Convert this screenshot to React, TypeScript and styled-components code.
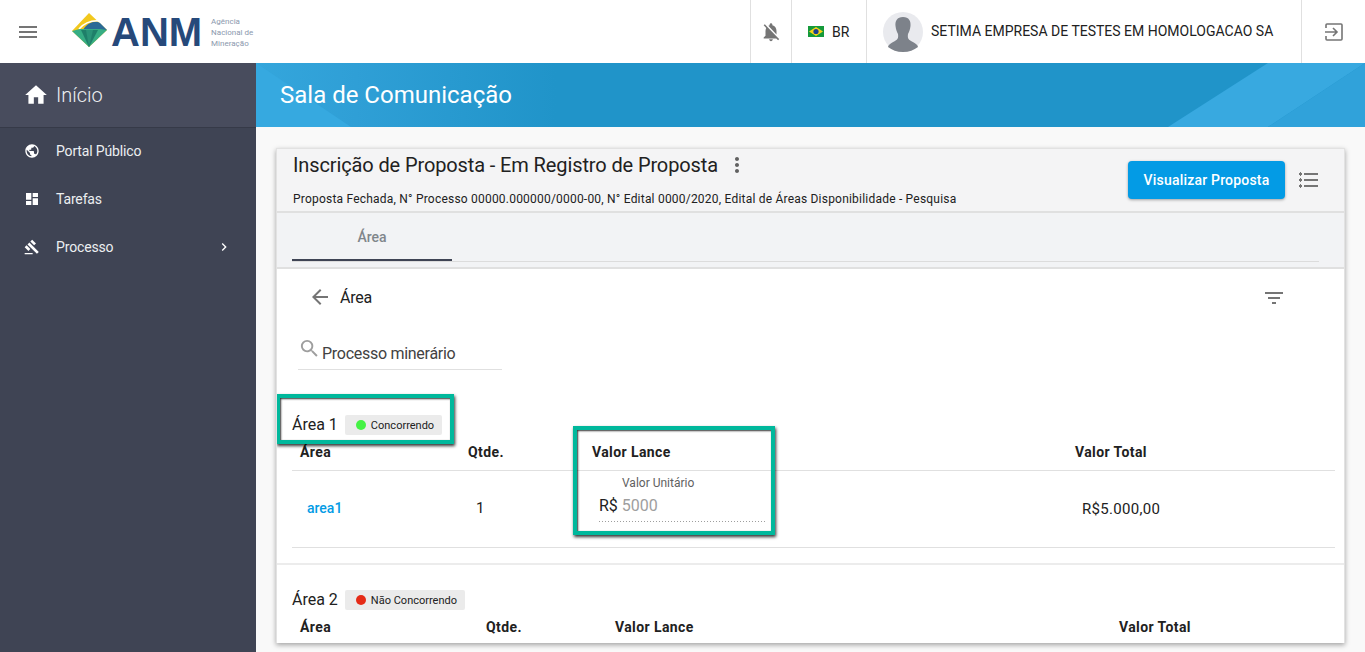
import React from "react";
import styled, { createGlobalStyle } from "styled-components";
import {
	MdMenu,
	MdNotificationsOff,
	MdHome,
	MdPublic,
	MdDashboard,
	MdGavel,
	MdChevronRight,
	MdMoreVert,
	MdFilterList,
	MdArrowBack,
	MdSearch,
} from "react-icons/md";

const GlobalStyle = createGlobalStyle`
	html, body {
		margin: 0;
		padding: 0;
		height: 100%;
		overflow: hidden;
		background: #f9f9f9;
		font-family: Roboto, "Liberation Sans", sans-serif;
		color: #212121;
	}
	* {
		box-sizing: border-box;
	}
`;

const Logo = () => (
	<LogoHold>
		<svg width="36" height="35" viewBox="0 0 36 35">
			<polygon points="0,18 17,0 35,17 17,34" fill="#f2c81e" />
			<path d="M11 17 C15 9 24 7 28 10 L35 17 Z" fill="#2b6a96" />
			<path d="M7 16 C13 9 21 7 29 8" stroke="#ffffff" strokeWidth="1.6" fill="none" />
			<polygon points="0,18 8,16 28,16 35,17 17,34" fill="#36ad84" />
			<polygon points="9,17 26,17 17,34" fill="#1f7f69" />
			<polygon points="14,17 21,17 17,34" fill="#2a9377" />
		</svg>
		<LogoName>ANM</LogoName>
		<LogoText>
			<span>Agência</span>
			<span>Nacional de</span>
			<span>Mineração</span>
		</LogoText>
	</LogoHold>
);

const BrazilFlag = () => (
	<svg width="16" height="11" viewBox="0 0 16 11">
		<rect width="16" height="11" fill="#159a3b" />
		<polygon points="8,1 15,5.5 8,10 1,5.5" fill="#f7d117" />
		<circle cx="8" cy="5.5" r="2.6" fill="#1b3f8f" />
	</svg>
);

const Avatar = () => (
	<AvatarHold>
		<svg width="40" height="40" viewBox="0 0 40 40">
			<circle cx="20" cy="20" r="20" fill="#e9eaee" />
			<path
				d="M20 5 C14 5 12 9 12.5 14 C13 18 14 20 15 22 C15.5 26 15 27 12 29 C8 31 5 33 5 35 C9 38 14 40 20 40 C26 40 31 38 35 35 C35 33 32 31 28 29 C25 27 24.5 26 25 22 C26 20 27 18 27.5 14 C28 9 26 5 20 5 Z"
				fill="#7d828a"
			/>
		</svg>
	</AvatarHold>
);

const ExitIcon = () => (
	<svg width="18" height="18" viewBox="0 0 18 18" fill="none" stroke="#757575" strokeWidth="1.6">
		<path d="M1 5 V2 Q1 1 2 1 H16 Q17 1 17 2 V16 Q17 17 16 17 H2 Q1 17 1 16 V13" />
		<path d="M0 9 H12 M8 5 L12 9 L8 13" />
	</svg>
);

const ListIcon = () => (
	<svg width="20" height="16" viewBox="0 0 20 16" fill="#757575">
		<rect x="5" y="1" width="14" height="2" />
		<rect x="5" y="7" width="14" height="2" />
		<rect x="5" y="13" width="14" height="2" />
		<rect x="0" y="1" width="3" height="2" />
		<rect x="0" y="7" width="3" height="2" />
		<rect x="0" y="13" width="3" height="2" />
		<rect x="1" y="0" width="1" height="4" />
		<rect x="1" y="6" width="1" height="4" />
		<rect x="1" y="12" width="1" height="4" />
	</svg>
);

const App: React.FC = () => {
	return (
		<Page>
			<GlobalStyle />
			<Header>
				<MenuButton>
					<MdMenu size={24} color="#757575" />
				</MenuButton>
				<Logo />
				<HeaderRight>
					<BellCell>
						<MdNotificationsOff size={22} color="#757575" />
					</BellCell>
					<LangCell>
						<BrazilFlag />
						<span>BR</span>
					</LangCell>
					<UserCell>
						<Avatar />
						<span>SETIMA EMPRESA DE TESTES EM HOMOLOGACAO SA</span>
					</UserCell>
					<ExitCell>
						<ExitIcon />
					</ExitCell>
				</HeaderRight>
			</Header>
			<Body>
				<Sidebar>
					<HomeItem>
						<MdHome size={26} color="#fff" />
						<span>Início</span>
					</HomeItem>
					<MenuItem>
						<MdPublic size={16} color="#fff" />
						<span>Portal Público</span>
					</MenuItem>
					<MenuItem>
						<MdDashboard size={16} color="#fff" />
						<span>Tarefas</span>
					</MenuItem>
					<MenuItem>
						<MdGavel size={16} color="#fff" />
						<span>Processo</span>
						<MdChevronRight size={16} color="#fff" />
					</MenuItem>
				</Sidebar>
				<Main>
					<Banner>
						<BannerCorner />
						<BannerStripe $color="#38a9e0" $clip="polygon(100px 0, 197px 0, 100px 100%, 0 100%)" />
						<BannerStripe $color="#30a2da" $clip="polygon(197px 0, 197px 100%, 100px 100%)" />
						<h1>Sala de Comunicação</h1>
					</Banner>
					<Card>
						<CardHead>
							<CardTitles>
								<TitleRow>
									<h2>Inscrição de Proposta - Em Registro de Proposta</h2>
									<MdMoreVert size={24} color="#616161" />
								</TitleRow>
								<p>
									Proposta Fechada, N° Processo 00000.000000/0000-00, N° Edital 0000/2020, Edital de
									Áreas Disponibilidade - Pesquisa
								</p>
							</CardTitles>
							<PrimaryButton>Visualizar Proposta</PrimaryButton>
							<ListIcon />
						</CardHead>
						<TabBar>
							<TabRow>
								<Tab>Área</Tab>
							</TabRow>
						</TabBar>
						<CardBody>
							<BackRow>
								<MdArrowBack size={24} color="#757575" />
								<span>Área</span>
								<MdFilterList size={24} color="#757575" />
							</BackRow>
							<SearchField>
								<MdSearch size={23} color="#9e9e9e" />
								<span>Processo minerário</span>
							</SearchField>
							<Section>
								<SectionTitle>
									<span>Área 1</span>
									<Status>
										<Dot color="#44f244" />
										Concorrendo
									</Status>
									<Highlight $left={-16} $top={-18} $width={178} $height={50} />
								</SectionTitle>
								<TableRow $cols="168px 124px 483px 1fr">
									<span>Área</span>
									<span>Qtde.</span>
									<span>Valor Lance</span>
									<span>Valor Total</span>
								</TableRow>
								<ValueRow>
									<AreaLink>area1</AreaLink>
									<Qty>1</Qty>
									<BidField>
										<label>Valor Unitário</label>
										<div>
											<span>R$</span>
											<em>5000</em>
										</div>
									</BidField>
									<Total>R$5.000,00</Total>
									<Highlight $left={281} $top={-45} $width={202} $height={109} />
								</ValueRow>
							</Section>
							<SecondSection>
								<SectionTitle>
									<span>Área 2</span>
									<Status>
										<Dot color="#e52b17" />
										Não Concorrendo
									</Status>
								</SectionTitle>
								<TableRow $cols="186px 129px 504px 1fr">
									<span>Área</span>
									<span>Qtde.</span>
									<span>Valor Lance</span>
									<span>Valor Total</span>
								</TableRow>
							</SecondSection>
						</CardBody>
					</Card>
				</Main>
			</Body>
		</Page>
	);
};

export default App;

const Page = styled.div`
	width: 1365px;
	height: 652px;
	display: flex;
	flex-direction: column;
	overflow: hidden;
`;

const Header = styled.header`
	height: 63px;
	flex: none;
	background: #fff;
	display: flex;
	align-items: stretch;
`;

const MenuButton = styled.div`
	width: 56px;
	display: flex;
	align-items: center;
	justify-content: center;
`;

const LogoHold = styled.div`
	display: flex;
	align-items: center;
	margin-left: 16px;

	svg {
		margin-right: 3px;
		margin-bottom: 3px;
	}
`;

const LogoName = styled.div`
	font-family: "Liberation Sans", sans-serif;
	font-weight: 700;
	font-size: 40px;
	color: #26497a;
	margin-right: 9px;
	margin-top: 2px;
`;

const LogoText = styled.div`
	display: flex;
	flex-direction: column;
	font-size: 8px;
	line-height: 11px;
	color: #8b98ad;
	margin-top: 2px;
`;

const HeaderRight = styled.div`
	margin-left: auto;
	display: flex;
	align-items: stretch;
`;

const Cell = styled.div`
	display: flex;
	align-items: center;
	border-left: 1px solid #e0e0e0;
`;

const BellCell = styled(Cell)`
	width: 41px;
	justify-content: center;
`;

const LangCell = styled(Cell)`
	width: 75px;
	padding-left: 16px;
	gap: 8px;
	font-size: 14px;
	color: #212121;
`;

const UserCell = styled(Cell)`
	width: 435px;
	padding-left: 16px;
	font-size: 14px;
	color: #212121;

	span {
		margin-left: 8px;
		margin-bottom: 2px;
	}
`;

const AvatarHold = styled.div`
	width: 40px;
	height: 40px;
	flex: none;
`;

const ExitCell = styled(Cell)`
	width: 64px;
	justify-content: center;
`;

const Body = styled.div`
	flex: 1;
	display: flex;
	min-height: 0;
`;

const Sidebar = styled.nav`
	width: 256px;
	flex: none;
	background: #3f4454;
	color: #eceff1;
`;

const HomeItem = styled.div`
	height: 65px;
	display: flex;
	align-items: center;
	padding-left: 23px;
	background: #484c5d;
	border-bottom: 1px solid #363a48;
	font-size: 20px;
	font-weight: 300;

	span {
		margin-left: 7px;
	}
`;

const MenuItem = styled.div`
	height: 48px;
	display: flex;
	align-items: center;
	padding-left: 24px;
	padding-right: 24px;
	font-size: 14px;
	letter-spacing: -0.15px;

	span {
		margin-left: 16px;
		flex: 1;
	}

	&:nth-child(2) {
		margin-top: -1px;
	}
`;

const Main = styled.main`
	flex: 1;
	min-width: 0;
	background: #f9f9f9;
	padding: 0 20px;
`;

const Banner = styled.div`
	height: 64px;
	margin: 0 -20px;
	position: relative;
	overflow: hidden;
	background: linear-gradient(90deg, #34a6dc 0, #2f9fd6 100px, #2094c9 300px);
	display: flex;
	align-items: center;
	padding-left: 24px;

	h1 {
		position: relative;
		margin: 0;
		font-size: 24px;
		font-weight: 400;
		color: #fff;
	}
`;

const BannerCorner = styled.div`
	position: absolute;
	top: 0;
	left: 0;
	bottom: 0;
	width: 95px;
	background: #36a9e0;
	clip-path: polygon(0 0, 100% 100%, 0 100%);
`;

const BannerStripe = styled.div<{ $color: string; $clip: string }>`
	position: absolute;
	top: 0;
	right: 0;
	bottom: 0;
	width: 197px;
	background: ${(p) => p.$color};
	clip-path: ${(p) => p.$clip};
`;

const Card = styled.section`
	margin-top: 21px;
	height: 495px;
	background: #fff;
	border: 1px solid #e2e2e2;
	border-bottom: none;
	box-shadow: 0 2px 5px rgba(0, 0, 0, 0.35);
	overflow: hidden;
	display: flex;
	flex-direction: column;
`;

const CardHead = styled.div`
	height: 64px;
	flex: none;
	background: #f4f4f5;
	border-bottom: 2px solid #e0e0e0;
	display: flex;
	align-items: center;
	padding: 0 25px 0 16px;
`;

const CardTitles = styled.div`
	flex: 1;
	min-width: 0;
	align-self: stretch;

	p {
		margin: 13px 0 0;
		font-size: 12px;
		line-height: 14px;
		letter-spacing: 0.21px;
		color: #212121;
	}
`;

const TitleRow = styled.div`
	display: flex;
	align-items: center;
	height: 29px;
	margin-top: 1px;

	h2 {
		margin: 0 7px 0 0;
		font-size: 20px;
		font-weight: 400;
		color: #212121;
		letter-spacing: -0.117px;
	}
`;

const PrimaryButton = styled.button`
	width: 157px;
	height: 38px;
	margin-right: 14px;
	border: none;
	border-radius: 4px;
	background: #039be5;
	color: #fff;
	font-family: Roboto, sans-serif;
	font-size: 14px;
	font-weight: 500;
	letter-spacing: 0.2px;
	box-shadow: 0 1px 3px rgba(0, 0, 0, 0.35);
`;

const TabBar = styled.div`
	height: 56px;
	flex: none;
	background: #f2f3f5;
	border-bottom: 2px solid #e0e0e0;
	padding: 0 25px 0 15px;
`;

const TabRow = styled.div`
	height: 49px;
	border-bottom: 1px solid #dcdcdc;
`;

const Tab = styled.div`
	width: 160px;
	height: 48px;
	padding-top: 2px;
	display: flex;
	align-items: center;
	justify-content: center;
	font-size: 14px;
	font-weight: 500;
	color: #80868b;
	border-bottom: 2px solid #3f4454;
`;

const CardBody = styled.div`
	flex: 1;
	min-height: 0;
	display: flex;
	flex-direction: column;
`;

const BackRow = styled.div`
	height: 56px;
	flex: none;
	display: flex;
	align-items: center;
	padding: 0 58px 0 31px;
	font-size: 16px;
	letter-spacing: -0.2px;

	span {
		flex: 1;
		margin-left: 8px;
	}

	svg:last-child {
		margin-top: 2px;
	}
`;

const SearchField = styled.div`
	width: 204px;
	height: 45px;
	flex: none;
	margin-left: 21px;
	border-bottom: 1px solid #e0e0e0;
	display: flex;
	align-items: flex-end;
	padding-bottom: 6px;
	font-size: 16px;
	letter-spacing: -0.28px;
	color: #424242;

	svg {
		margin-bottom: 3px;
		margin-right: 1px;
	}
`;

const Section = styled.div`
	padding: 0 9px 15px 15px;
	border-bottom: 2px solid #ececec;
	margin-top: 42px;
`;

const SecondSection = styled(Section)`
	margin-top: 0;
	padding-top: 22px;
	border-bottom: none;
`;

const SectionTitle = styled.div`
	position: relative;
	height: 24px;
	display: flex;
	align-items: center;
	gap: 7px;
	font-size: 16px;
`;

const Status = styled.div`
	height: 20px;
	margin-top: 2px;
	display: flex;
	align-items: center;
	gap: 5px;
	padding: 0 8px 0 11px;
	border-radius: 2px;
	background: #ebebeb;
	font-size: 11px;
	color: #212121;
`;

const Dot = styled.i<{ color: string }>`
	width: 10px;
	height: 10px;
	border-radius: 50%;
	background: ${(p) => p.color};
`;

const TableRow = styled.div<{ $cols: string }>`
	display: grid;
	grid-template-columns: ${(p) => p.$cols};
	height: 34px;
	align-items: center;
	padding: 0 0 3px 8px;
	font-size: 14px;
	font-weight: 700;
	letter-spacing: 0.4px;
	color: #212121;
`;

const ValueRow = styled.div`
	position: relative;
	height: 78px;
	display: grid;
	grid-template-columns: 176px 124px 483px 1fr;
	align-items: center;
	border-top: 1px solid #e0e0e0;
	border-bottom: 1px solid #e0e0e0;
	font-size: 14px;
`;

const AreaLink = styled.a`
	margin-left: 15px;
	margin-bottom: 2px;
	color: #039be5;
	font-weight: 500;
`;

const Qty = styled.span`
	margin-left: 8px;
	margin-bottom: 2px;
	font-size: 15px;
`;

const BidField = styled.div`
	width: 166px;
	margin-left: 7px;
	margin-bottom: 21px;
	padding-bottom: 7px;
	background: linear-gradient(to right, #9e9e9e 1px, transparent 1px) left bottom / 3px 1px repeat-x;

	label {
		display: block;
		margin-left: 23px;
		font-size: 12px;
		line-height: 14px;
		color: #616161;
	}

	div {
		display: flex;
		gap: 4px;
		margin-top: 6px;
		font-size: 16px;
		line-height: 19px;
	}

	em {
		font-style: normal;
		color: #9e9e9e;
	}
`;

const Total = styled.span`
	margin-left: 7px;
	margin-bottom: 1px;
	font-size: 15px;
	letter-spacing: 0.3px;
`;

const Highlight = styled.div<{ $left: number; $top: number; $width: number; $height: number }>`
	position: absolute;
	left: ${(p) => p.$left}px;
	top: ${(p) => p.$top}px;
	width: ${(p) => p.$width}px;
	height: ${(p) => p.$height}px;
	border: 4px solid #00b89c;
	box-shadow: 1px 2px 3px rgba(0, 0, 0, 0.8), inset 1px 1px 2px rgba(0, 0, 0, 0.8);
	pointer-events: none;
`;
